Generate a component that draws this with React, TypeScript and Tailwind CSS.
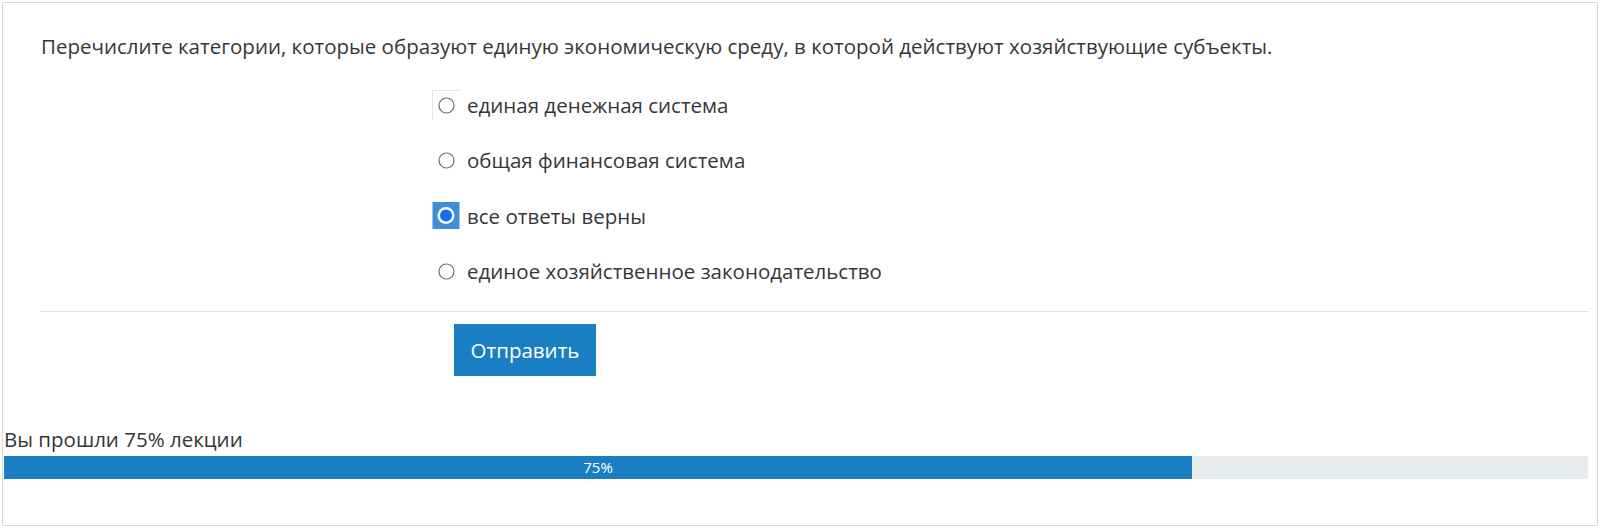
const options = [
  "единая денежная система",
  "общая финансовая система",
  "все ответы верны",
  "единое хозяйственное законодательство",
];

function Radio({ checked, focused }: { checked: boolean; focused: boolean }) {
  if (checked) {
    return (
      <svg width="28" height="27" viewBox="0 0 28 27">
        <rect x="0.5" y="0" width="27" height="27" fill="#3f8fd6" />
        <circle cx="14" cy="13.5" r="8.5" fill="#ffffff" />
        <circle cx="14" cy="13.5" r="6" fill="#0f6ff2" />
      </svg>
    );
  }
  return (
    <div
      className={
        "flex h-[30px] w-[28px] items-center justify-center " +
        (focused ? "border-l border-t border-[#dfe9f4]" : "")
      }
    >
      <svg width="17" height="17" viewBox="0 0 17 17">
        <circle cx="8.5" cy="8.5" r="7.5" fill="#ffffff" stroke="#6f6f6f" strokeWidth="1.2" />
      </svg>
    </div>
  );
}

export default function App() {
  const selected = 2;
  const progress = 75;

  return (
    <div
      className="h-[528px] w-[1600px] bg-white pl-[2px] pt-[2px] text-[#343739]"
      style={{ fontFamily: '"Open Sans", "Noto Sans", sans-serif' }}
    >
      <div className="flex h-[524px] w-[1596px] flex-col border border-[#d6d6d6]">
        <div className="pl-[37px] pr-[8px] pt-[28px]">
          <p className="ml-px text-[20.5px] leading-[30px]">
            Перечислите категории, которые образуют единую экономическую среду, в которой действуют хозяйствующие субъекты.
          </p>

          <div className="mt-[16px] ml-[392px] flex flex-col">
            {options.map((opt, i) => (
              <label key={opt} className="flex h-[55.5px] items-center gap-[7px]">
                <div className="flex w-[28px] items-center justify-center">
                  <Radio checked={i === selected} focused={i === 0} />
                </div>
                <span className="text-[20.5px] leading-[26px]">{opt}</span>
              </label>
            ))}
          </div>

          <div className="mt-[12px] h-px bg-[#dee2e6]" />

          <button className="mt-[12px] ml-[414px] h-[52px] w-[142px] bg-[#1a7fc2] text-[20.5px] text-white">
            Отправить
          </button>
        </div>

        <div className="mt-[51px] pl-px pr-[9px]">
          <div className="text-[20.5px] leading-[24px]">Вы прошли {progress}% лекции</div>
          <div className="mt-[5px] flex h-[23px] bg-[#e9ecef]">
            <div
              className="flex items-center justify-center bg-[#1a7fc2] text-[15px] text-white"
              style={{ width: `${progress}%` }}
            >
              {progress}%
            </div>
          </div>
        </div>
      </div>
    </div>
  );
}
